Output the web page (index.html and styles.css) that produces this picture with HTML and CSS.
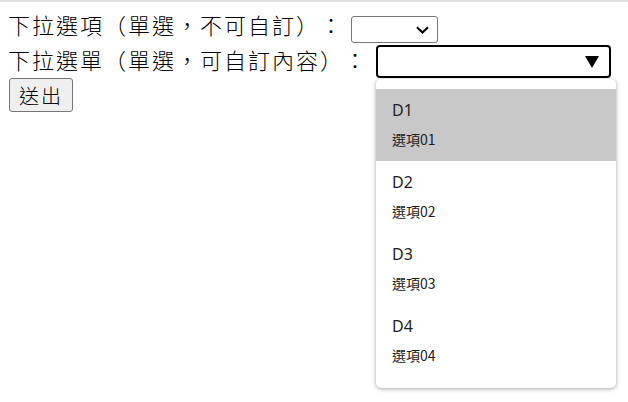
FILE: index.html
```html
<!DOCTYPE html>
<html lang="zh-Hant">
<head>
  <meta charset="UTF-8">
  <title>下拉選單</title>
  <link rel="stylesheet" href="styles.css">
</head>
<body>
  <form class="pick-form">
    <div class="row row-fixed">
      <label class="label">下拉選項（單選，不可自訂）：</label>
      <span class="select select-fixed">
        <svg width="13" height="8" viewBox="0 0 13 8"><path d="M1 1.2 L6.5 6.5 L12 1.2" fill="none" stroke="#000" stroke-width="2"/></svg>
      </span>
    </div>
    <div class="row row-custom">
      <label class="label">下拉選單（單選，可自訂內容）：</label>
      <span class="combo">
        <span class="select select-custom">
          <svg width="14" height="12" viewBox="0 0 14 12"><polygon points="0,0 14,0 7,12" fill="#000"/></svg>
        </span>
        <div class="combo-list">
          <div class="combo-item active">
            <div class="item-title">D1</div>
            <div class="item-sub">選項01</div>
          </div>
          <div class="combo-item">
            <div class="item-title">D2</div>
            <div class="item-sub">選項02</div>
          </div>
          <div class="combo-item">
            <div class="item-title">D3</div>
            <div class="item-sub">選項03</div>
          </div>
          <div class="combo-item">
            <div class="item-title">D4</div>
            <div class="item-sub">選項04</div>
          </div>
        </div>
      </span>
    </div>
    <button type="button" class="submit">送出</button>
  </form>
</body>
</html>
```

FILE: styles.css
```css
html {
  border-top: 2px solid #e0e0e0;
}
body {
  margin: 6px 8px 0;
  min-height: 394px;
  font-family: 'Noto Sans CJK TC', 'Noto Sans', sans-serif;
  color: #000;
  background-color: #fff;
  text-spacing-trim: space-all;
}
.pick-form {
  position: relative;
}
.row {
  display: flex;
  align-items: flex-start;
}
.row-fixed {
  height: 37px;
}
.row-custom {
  position: relative;
  z-index: 2;
  height: 33px;
}
.label {
  font-size: 22px;
  font-weight: 300;
  letter-spacing: 2px;
  line-height: 32px;
  white-space: nowrap;
  text-spacing-trim: space-all;
}
.row-custom .label {
  margin-top: -2px;
}
.select {
  display: inline-flex;
  align-items: center;
  justify-content: flex-end;
  box-sizing: border-box;
  background-color: #fff;
}
.select-fixed {
  width: 87px;
  height: 27px;
  margin-top: 8px;
  margin-left: 7px;
  padding-right: 8px;
  border: 1px solid #767676;
  border-radius: 3px;
}
.combo {
  position: relative;
  margin-left: 8px;
}
.select-custom {
  width: 235px;
  height: 33px;
  padding-right: 10px;
  border: 2px solid #000;
  border-radius: 4px;
}
.combo-list {
  position: absolute;
  top: 34px;
  left: 0;
  width: 240px;
  padding: 10px 0 11px;
  background-color: #fff;
  border-radius: 5px;
  box-shadow: 0 1px 4px rgba(0, 0, 0, 0.35);
}
.combo-item {
  height: 72px;
  box-sizing: border-box;
  padding: 11px 16px 0;
  color: #222;
}
.combo-item.active {
  background-color: #c8c8c8;
}
.item-title {
  font-family: 'Noto Sans', sans-serif;
  font-size: 16px;
  line-height: 20px;
}
.item-sub {
  margin-top: 9px;
  font-family: 'Noto Sans CJK TC', sans-serif;
  font-size: 14px;
  line-height: 20px;
}
.submit {
  display: block;
  width: 64px;
  height: 34px;
  margin: 0 0 0 1px;
  padding: 0;
  font-family: 'Noto Sans CJK TC', sans-serif;
  font-size: 20px;
  font-weight: 300;
  letter-spacing: 2px;
  background-color: #efefef;
  border: 1px solid #767676;
  border-radius: 3px;
  color: #000;
}
```
